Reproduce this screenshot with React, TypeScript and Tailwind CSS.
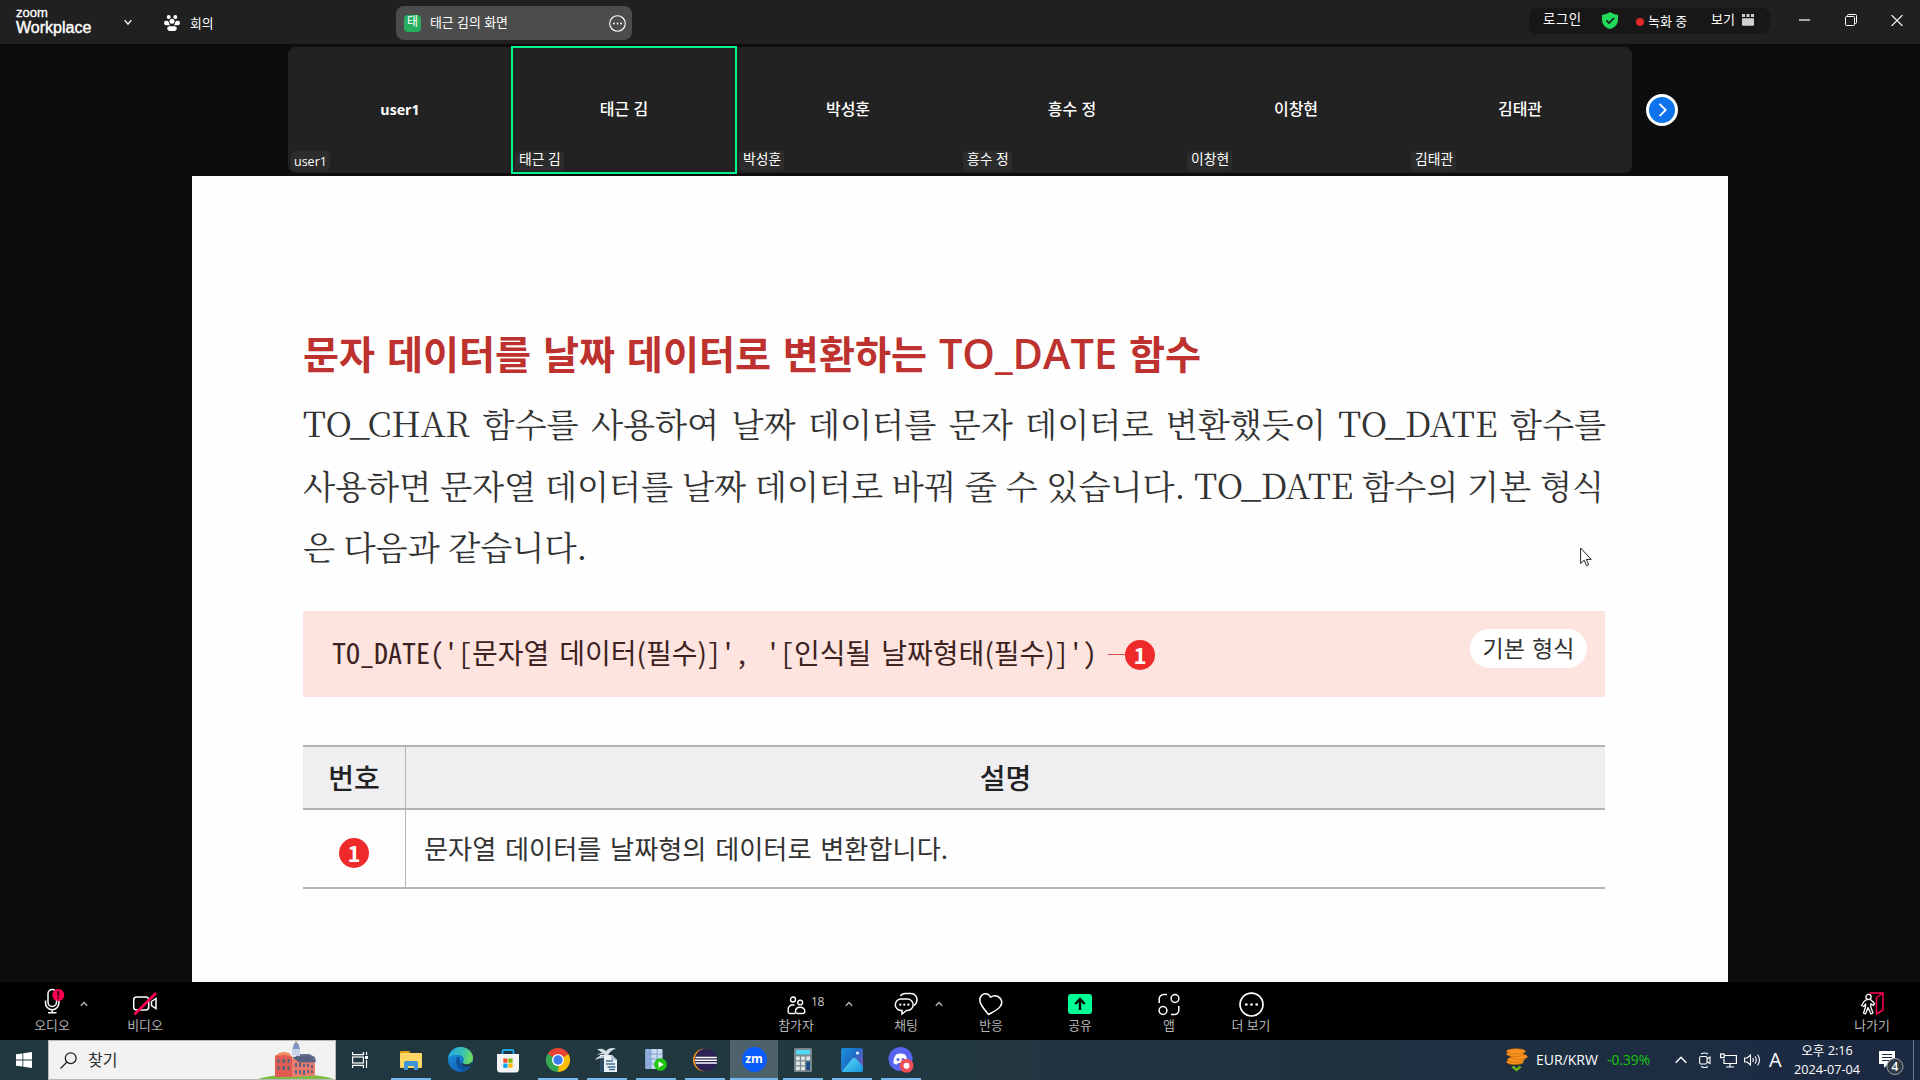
import React from 'react';

const KR = "font-['Open_Sans','Noto_Sans_CJK_KR',sans-serif]";

function Caret({ className = '' }: { className?: string }) {
  return (
    <svg className={`h-[6px] w-[8px] shrink-0 ${className}`} viewBox="0 0 8 6" fill="none" stroke="#b5b5b5" strokeWidth="1.4">
      <path d="M0.8 4.8 4 1.6l3.2 3.2" />
    </svg>
  );
}

function Dots({ size, className = '' }: { size: number; className?: string }) {
  return (
    <svg width={size} height={size} className={`shrink-0 ${className}`} viewBox="0 0 24 24" fill="none" stroke="currentColor" strokeWidth="1.6">
      <circle cx="12" cy="12" r="11" />
      <g fill="currentColor" stroke="none">
        <circle cx="7" cy="12" r="1.3" />
        <circle cx="12" cy="12" r="1.3" />
        <circle cx="17" cy="12" r="1.3" />
      </g>
    </svg>
  );
}

function TopBar() {
  return (
    <header className="flex h-[44px] shrink-0 items-start bg-[#202020] text-[13px] text-white">
      <div className="ml-[16px] mt-[7px] w-[76px] font-['Liberation_Sans',sans-serif] whitespace-nowrap">
        <div className="text-[13px] leading-[12px] [-webkit-text-stroke:0.3px_white]">zoom</div>
        <div className="text-[16px] leading-[17px] [-webkit-text-stroke:0.4px_white]">Workplace</div>
      </div>
      <svg className="ml-[32px] mt-[19px] h-[7px] w-[8px]" viewBox="0 0 8 7" fill="none" stroke="#fff" strokeWidth="1.3">
        <path d="M0.7 1.2 4 5.2l3.3-4" />
      </svg>
      <svg className="ml-[32px] mt-[15px] h-[16px] w-[16px]" viewBox="0 0 16 16" fill="#fff">
        <circle cx="4.7" cy="2" r="2" />
        <circle cx="11.3" cy="2" r="2" />
        <circle cx="2.3" cy="8" r="2.3" />
        <circle cx="13.7" cy="8" r="2.3" />
        <circle cx="8" cy="6.3" r="2.5" />
        <path d="M3.6 5.2 6 10.2H2.6zM12.4 5.2 10 10.2h3.4z" />
        <rect x="3.2" y="11.2" width="9.6" height="4.8" rx="2.4" />
      </svg>
      <div className="ml-[10px] mt-[14px] w-[31px] text-[12.8px] leading-[18px]">회의</div>

      <div className="ml-[175px] mt-[6px] flex h-[34px] w-[236px] items-center rounded-[8px] bg-[#4c4c4c]">
        <div className="ml-[8px] flex h-[17px] w-[17px] items-center justify-center rounded-[4px] bg-[#27ae60] text-[12px] leading-none">
          <span className="-mt-[3px]">태</span>
        </div>
        <div className="mb-[2px] ml-[9px] w-[179px] text-[12.9px] leading-[18px]">태근 김의 화면</div>
        <Dots size={17} />
      </div>

      <div className="ml-[897px] mt-[8px] flex h-[26px] w-[241px] items-start rounded-[8px] bg-[#171717]">
        <div className="ml-[14px] mt-[2px] w-[59px] text-[13.4px] leading-[18px] tracking-[0.6px]">로그인</div>
        <svg className="mt-[4px] h-[17px] w-[16px]" viewBox="0 0 16 17">
          <path d="M8 0c2 1.6 4.600 2.500 8 2.700V8c0 4.500-3.400 7.600-8 9-4.600-1.400-8-4.500-8-9V2.700C3.400 2.500 6 1.600 8 0z" fill="#23d959" />
          <path d="M4.400 8.400 7 11l5-5" fill="none" stroke="#171717" strokeWidth="1.6" />
        </svg>
        <div className="ml-[18px] mt-[10px] h-[8px] w-[8px] rounded-full bg-[#e02828]" />
        <div className="ml-[4px] mt-[4px] w-[63px] text-[13px] leading-[18px]">녹화 중</div>
        <div className="mt-[2px] w-[31px] text-[13px] leading-[18px]">보기</div>
        <svg className="mt-[6px] h-[12px] w-[12px]" viewBox="0 0 12 12" fill="#d0d0d0">
          <path d="M0 0h3v3H0zM4.500 0h3v3h-3zM9 0h3v3H9z" />
          <rect y="4.300" width="12" height="7.400" rx="1" />
        </svg>
      </div>
      <svg className="ml-[29px] mt-[19px] h-[3px] w-[11px]" viewBox="0 0 11 3"><path d="M0 1h11" stroke="#ccc" strokeWidth="1.600" /></svg>
      <svg className="ml-[35px] mt-[14px] h-[12px] w-[12px]" viewBox="0 0 12 12" fill="none" stroke="#fff" strokeWidth="1">
        <rect x="0.500" y="2.500" width="9" height="9" rx="1" />
        <path d="M2.500 2.500v-1a1 1 0 0 1 1-1h7a1 1 0 0 1 1 1v7a1 1 0 0 1-1 1h-1" />
      </svg>
      <svg className="ml-[34px] mt-[15px] h-[11px] w-[12px]" viewBox="0 0 12 11" stroke="#fff" strokeWidth="1.100">
        <path d="M0.500 0l11 11M11.500 0l-11 11" />
      </svg>
    </header>
  );
}

const people = ['user1', '태근 김', '박성훈', '흥수 정', '이창현', '김태관'];

function Gallery() {
  return (
    <section className="flex h-[132px] shrink-0 items-start pl-[288px] pt-[3px] text-white">
      <div className="flex h-[126px] w-[1344px] rounded-[8px] bg-[#222]">
        {people.map((p, i) => (
          <div key={p} className="relative flex w-[224px] items-center justify-center">
            {i === 1 && <div className="absolute -bottom-[1px] -left-[1px] -right-[1px] -top-[1px] border-2 border-[#00f58c]" />}
            <span className={i === 0 ? 'mb-[1px] text-[14.200px] font-bold leading-[20px]' : 'mb-[3px] text-[16px] font-medium leading-[20px]'}>{p}</span>
            <span className={`absolute bottom-[2px] left-[3px] h-[20px] rounded-[4px] bg-[#2c2c2c] ${i === 0 ? 'px-[3px] text-[12.500px] leading-[21px]' : 'pl-[4px] pr-[3px] text-[13.800px] leading-[16px]'}`}>{p}</span>
          </div>
        ))}
      </div>
      <div className="ml-[14px] mt-[47px] flex h-[32px] w-[32px] items-center justify-center rounded-full border-[3px] border-white bg-[#0e72ed]">
        <svg className="h-[14px] w-[9px]" viewBox="0 0 9 14" fill="none" stroke="#fff" strokeWidth="1.800"><path d="M1.500 0.800 7.700 7l-6.200 6.200" /></svg>
      </div>
    </section>
  );
}

function RedOne() {
  return (
    <span className="flex h-[30px] w-[30px] shrink-0 items-center justify-center rounded-full bg-[#ee2a2a] font-['Noto_Sans_CJK_KR',sans-serif] text-[22px] font-bold leading-[30px] text-white">
      <span className="-mt-[3px]">1</span>
    </span>
  );
}

function La({ children }: { children: string }) {
  return <span className="text-[34.600px]">{children}</span>;
}

const M = "font-['Noto_Sans_Mono_CJK_KR','Liberation_Mono',monospace]";

function Slide() {
  return (
    <main className="mx-auto flex h-[806px] w-[1536px] shrink-0 flex-col bg-[#fefefe] pl-[111px] font-['Noto_Sans_CJK_KR',sans-serif]">
      <h1 className="mt-[152px] h-[48px] w-[898px] whitespace-nowrap text-[39.200px] font-bold leading-[48px] text-[#bd322e] [text-align-last:justify]">
        문자 데이터를 날짜 데이터로 변환하는 <span className="font-['Open_Sans'] text-[41.500px] font-semibold leading-[40px]">TO_DATE</span> 함수
      </h1>
      <div className="mt-[15px] whitespace-nowrap font-['Noto_Serif_CJK_KR','Noto_Sans_CJK_KR',serif] text-[33.200px] leading-[62px] text-[#333]">
        <p className="h-[62px] w-[1303px] [text-align-last:justify]"><La>TO_CHAR</La> 함수를 사용하여 날짜 데이터를 문자 데이터로 변환했듯이 <La>TO_DATE</La> 함수를</p>
        <p className="h-[62px] w-[1301px] [text-align-last:justify]">사용하면 문자열 데이터를 날짜 데이터로 바꿔 줄 수 있습니다. <La>TO_DATE</La> 함수의 기본 형식</p>
        <p className="h-[62px] w-[283px] [text-align-last:justify]">은 다음과 같습니다.</p>
      </div>
      <div className="mt-[34px] flex h-[86px] w-[1302px] items-start bg-[#fee4df]">
        <div className="ml-[29px] mt-[21px] flex w-[768px] whitespace-pre text-[28px] leading-[40px] text-[#3d2222]">
          <div><span className={M}>TO_DATE('[</span>문자열</div>
          <div className="ml-[10px]">데이터(필수)<span className={M}>]',</span></div>
          <div className="ml-[17px]"><span className={M}>'[</span>인식될</div>
          <div className="ml-[10px]">날짜형태(필수)<span className={M}>]')</span></div>
        </div>
        <div className="ml-[8px] mt-[43px] h-px w-[17px] bg-[#e05050]" />
        <div className="mt-[29px]"><RedOne /></div>
        <div className="ml-[315px] mt-[18px] flex h-[39px] w-[117px] items-start justify-center rounded-full bg-white text-[23px] leading-[36px] text-[#333] [word-spacing:2px]">기본 형식</div>
      </div>
      <div className="mt-[48px] grid w-[1302px] grid-cols-[103px_1199px] text-[#222]">
        <div className="flex h-[65px] items-center justify-center border-y-2 border-r border-[#b4b3b7] bg-[#efeef1] pb-[1px] text-[28px] font-medium">번호</div>
        <div className="flex h-[65px] items-center justify-center border-y-2 border-[#b4b3b7] bg-[#efeef1] pb-[1px] text-[28px] font-medium">설명</div>
        <div className="flex h-[79px] items-center justify-center border-b-2 border-r border-[#b4b3b7] pt-[9px]"><RedOne /></div>
        <div className="flex h-[79px] items-center border-b-2 border-[#b4b3b7] pl-[18px] text-[26.200px] text-[#333]">
          <p className="w-[524px] whitespace-nowrap [text-align-last:justify]">문자열 데이터를 날짜형의 데이터로 변환합니다.</p>
        </div>
      </div>
    </main>
  );
}

function Tool({ label, className, children }: { label: string; className: string; children: React.ReactNode }) {
  return (
    <div className={`relative flex w-[40px] flex-col items-center ${className}`}>
      <div className="mt-[9px] flex h-[26px] items-center justify-center">{children}</div>
      <div className="-mt-[1px] whitespace-nowrap text-[12.900px] leading-[18px] text-[#b4b4b4]">{label}</div>
    </div>
  );
}

function Toolbar() {
  return (
    <nav className="flex h-[58px] shrink-0 items-start bg-black text-white">
      <Tool label="오디오" className="ml-[32px]">
        <svg className="h-[26px] w-[26px] overflow-visible" viewBox="0 0 26 26" fill="none" stroke="#fff" strokeWidth="1.500">
          <rect x="9" y="-1.500" width="8.500" height="17" rx="4.250" />
          <path d="M6.500 9.500v2.500a6.700 6.700 0 0 0 13.400 0v-2.500M13.200 18.700v3.300M9 21.700h8.500" />
          <circle cx="19.300" cy="4" r="6" fill="#ff0050" stroke="none" />
          <path d="M19.300 0.200v4.600" stroke="#300" strokeWidth="1.800" />
          <circle cx="19.300" cy="6.900" r="1" fill="#300" stroke="none" />
        </svg>
      </Tool>
      <Caret className="ml-[8px] mt-[19px]" />
      <Tool label="비디오" className="ml-[37px]">
        <svg className="h-[26px] w-[26px]" viewBox="0 0 26 26" fill="none" stroke="#fff" strokeWidth="1.500">
          <rect x="1.700" y="6" width="15" height="13" rx="3" />
          <path d="M19.500 10.500 24 7.500v10l-4.500-3z" />
          <path d="M2.500 23.500 24 2" stroke="#ff0050" strokeWidth="2.600" />
        </svg>
      </Tool>
      <Tool label="참가자" className="ml-[611px]">
        <svg className="mt-[2px] h-[19px] w-[19px]" viewBox="0 0 19 19" fill="none" stroke="#fff" strokeWidth="1.400">
          <circle cx="6" cy="3.500" r="2.500" />
          <circle cx="13.200" cy="6.500" r="2.400" />
          <path d="M8 17.500H3A1.800 1.800 0 0 1 1.200 15.700V13A4 4 0 0 1 5.200 9h2.300" />
          <path d="M8.500 15.500c0-2.600 2-4.300 4.600-4.300s4.700 1.700 4.700 4.300c0 1.200-.8 2-2 2h-5.300c-1.200 0-2-.8-2-2z" />
        </svg>
        <span className="absolute left-[35px] top-[12px] text-[12px] leading-[16px] tracking-[-0.3px] text-[#c8c8c8]">18</span>
      </Tool>
      <Caret className="ml-[29px] mt-[19px]" />
      <Tool label="채팅" className="ml-[33px]">
        <svg className="h-[24px] w-[24px]" viewBox="0 0 24 24" fill="none" stroke="#fff" strokeWidth="1.500">
          <path d="M6.500 4C7.500 2.200 9 1.500 11.500 1.500H17a6 6 0 0 1 6 6c0 3-1 4.500-3 6" />
          <path d="M7 7h6.500a5.700 5.700 0 0 1 0 11.400H12.500L8 22v-3.600H7A5.700 5.700 0 0 1 7 7z" />
          <g fill="#fff" stroke="none"><circle cx="6.300" cy="12.700" r="1.100" /><circle cx="10.300" cy="12.700" r="1.100" /><circle cx="14.300" cy="12.700" r="1.100" /></g>
        </svg>
      </Tool>
      <Caret className="ml-[9px] mt-[19px]" />
      <Tool label="반응" className="ml-[28px]">
        <svg className="h-[24px] w-[24px]" viewBox="0 0 24 24" fill="none" stroke="#fff" strokeWidth="1.500" strokeLinejoin="round">
          <path d="M9.500 22.500C5 17 1.800 13.500 1 9.500.3 5 3 2 6 1.700c2.500-.2 4.300 1 5.500 3.500 2.500-1.700 5-2 7.500-.7 3.500 2 5 6 2.500 9.500C19.500 17.500 15 19.500 9.500 22.500z" />
        </svg>
      </Tool>
      <Tool label="공유" className="ml-[49px]">
        <svg className="h-[20px] w-[24px]" viewBox="0 0 24 20">
          <rect width="24" height="20" rx="3" fill="#00ff96" />
          <path d="M12 16V6M7.300 10 12 5l4.700 5" fill="none" stroke="#000" strokeWidth="2.400" />
        </svg>
      </Tool>
      <Tool label="앱" className="ml-[49px]">
        <svg className="h-[23px] w-[22px]" viewBox="0 0 22 23" fill="none" stroke="#fff" strokeWidth="1.500">
          <circle cx="17" cy="5.500" r="3.900" />
          <circle cx="5" cy="17.500" r="3.900" />
          <path d="M1.200 10V6a4.500 4.500 0 0 1 4.500-4.500H9M20.800 13v4a4.500 4.500 0 0 1-4.500 4.500H13" />
        </svg>
      </Tool>
      <Tool label="더 보기" className="ml-[42px]"><Dots size={25} /></Tool>
      <Tool label="나가기" className="ml-[581px]">
        <svg className="h-[26px] w-[24px]" viewBox="0 0 24 26" fill="none" stroke="#fff" strokeWidth="1.300" strokeLinejoin="round">
          <path d="M9.500 2H23v17l-6.500 4V6.500L23 2" stroke="#ff0050" strokeWidth="1.500" />
          <circle cx="8.500" cy="6" r="2.600" fill="#000" />
          <path d="M6 9c1.500-.7 3.500-.7 5 0l3.500 3.500-1 2-2.700-1.700V16l2.200 6-2 1-3-6.500L5.500 23l-2-.8L5.500 16l.2-3-2 2.500-2.200-1L4 10.500z" fill="#000" />
        </svg>
      </Tool>
    </nav>
  );
}

function TaskIcon({ w = 40, ml, on = true, active = false, children }: { w?: number; ml: string; on?: boolean; active?: boolean; children: React.ReactNode }) {
  return (
    <div className={`flex h-full flex-col items-center justify-between ${w === 48 ? 'w-[48px]' : 'w-[40px]'} ${ml} ${active ? 'bg-[#4d626a]' : ''}`}>
      <div className="flex h-[38px] items-center justify-center pt-[1px]">{children}</div>
      <div className={`h-[2px] w-full ${on ? 'bg-[#76b9ed]' : ''}`} />
    </div>
  );
}

function Building() {
  return (
    <svg className="h-[38px] w-[77px]" viewBox="0 0 77 38">
      <ellipse cx="38" cy="41" rx="41" ry="7.500" fill="#7dbb42" />
      <path d="M36 17 41 13h10l6 3 1 5H38z" fill="#66708f" />
      <path d="M17 14.500l8-2.500 9 3v21H17z" fill="#e05c52" />
      <path d="M18 15l3-3 5-1 5 1 3 4-8-2z" fill="#f08c5e" />
      <path d="M34 17l7 3 16 1.500v13L34 36z" fill="#ee7a6c" />
      <path d="M34 16l18-1 5 6.500H41z" fill="#56617f" />
      <path d="M34 14V8h8v7z" fill="#c8d2ea" />
      <path d="M34.500 8l1.500-5 2-2.500L40.500 3l1.500 5z" fill="#7f93bd" />
      <path d="M38 0v2" stroke="#e0a040" />
      <g fill="#5b6480">
        <path d="M19.500 18h2v4h-2zM24.500 18h2.500v4h-2.500zM29.500 18h2v4h-2zM19.500 25h2v4h-2zM24.500 25h2.500v4h-2.500zM29.500 25h2v4h-2zM37 22h2v4h-2zM41 22h2v4h-2zM45 23h2v3h-2zM49 23h2v3h-2zM53 24h2v3h-2zM37 29h2v4h-2zM41 29h2v4h-2zM45 29h2v5h-2zM49 29h2v3h-2zM53 29h2v3h-2z" />
      </g>
    </svg>
  );
}

function Taskbar() {
  return (
    <footer className="flex h-[40px] shrink-0 items-center bg-linear-to-r from-[#213740] via-[#22383f] via-45% to-[#1b2942] text-white">
      <svg className="ml-[16px] h-[16px] w-[16px]" viewBox="0 0 16 16" fill="#fff">
        <path d="M0 2.300 6.500 1.400v6.200H0zM7.300 1.300 16 0v7.600H7.300zM0 8.400h6.500v6.200L0 13.700zM7.300 8.400H16V16l-8.700-1.300z" />
      </svg>
      <div className="ml-[16px] flex h-[40px] w-[288px] items-center border border-[#b9b9b9] bg-[#f2f2f2] text-[#2b2b2b]">
        <svg className="ml-[11px] h-[17px] w-[17px]" viewBox="0 0 17 17" fill="none" stroke="#222" strokeWidth="1.300">
          <circle cx="10.700" cy="6.200" r="5.400" />
          <path d="M7 10 0.500 16.500" />
        </svg>
        <div className="-mt-[1px] ml-[11px] w-[170px] text-[16px] leading-[20px]">찾기</div>
        <Building />
      </div>
      <svg className="ml-[16px] h-[16px] w-[16px]" viewBox="0 0 16 16" fill="none" stroke="#fff" strokeWidth="1.200">
        <path d="M0.600 0v2.600h10.800V0M0.600 16v-2.600h10.800V16M14.500 0v3M14.500 8v8" />
        <rect x="0.600" y="5" width="10.800" height="6" />
        <rect x="13" y="4" width="3" height="3" fill="#fff" stroke="none" />
      </svg>
      <TaskIcon ml="ml-[23px]">
        <svg className="h-[20px] w-[22px]" viewBox="0 0 22 20">
          <path d="M0 2a1 1 0 0 1 1-1h8l2 3H0z" fill="#e5a50f" />
          <rect y="3" width="22" height="15" rx="1" fill="#ffd767" />
          <path d="M4 20v-7a2 2 0 0 1 2-2h10a2 2 0 0 1 2 2v7h-4v-4H8v4z" fill="#3f94d8" />
        </svg>
      </TaskIcon>
      <TaskIcon ml="ml-[9px]" on={false}>
        <svg className="h-[25px] w-[25px]" viewBox="0 0 24 24">
          <defs>
            <linearGradient id="edgeTop" x1="0" y1="0.300" x2="1" y2="0.500">
              <stop offset="0" stopColor="#2aa7e0" /><stop offset="0.550" stopColor="#35c2b8" /><stop offset="1" stopColor="#6edb55" />
            </linearGradient>
            <linearGradient id="edgeLow" x1="0" y1="0" x2="0.600" y2="1">
              <stop offset="0" stopColor="#1b9de2" /><stop offset="1" stopColor="#0f5fb4" />
            </linearGradient>
          </defs>
          <circle cx="12" cy="12" r="12" fill="url(#edgeLow)" />
          <path d="M0.200 10.500C1.500 4 6.500 0 12 0c7 0 12 5 12 10.500 0 4-3 6-6.500 6-3 0-4-1.300-3-2.500 2-2.500-.5-6.500-5-6.500C5 7.500 1.500 8.500.2 10.500z" fill="url(#edgeTop)" />
          <path d="M9.500 9c-3.500 4-1.500 11 5 13 3-.2 5.500-1.700 7-4-5 2-11-1-10.500-5.500 0-1.500-.3-3-1.500-3.500z" fill="#0c4f9c" />
          <path d="M14 14.500c-.8 1.500 1 2.200 3.500 2.200 2.500 0 4.500-1 5.500-2.500l-.5 4.300c-3 1-8.500.5-9.500-3z" fill="#22383f" />
        </svg>
      </TaskIcon>
      <TaskIcon ml="ml-[8px]" on={false}>
        <svg className="mt-[2px] h-[24px] w-[24px]" viewBox="0 0 24 24">
          <path d="M6.500 7V2.500A1.500 1.500 0 0 1 8 1h8a1.500 1.500 0 0 1 1.500 1.500V7" fill="none" stroke="#22a5e8" strokeWidth="1.800" />
          <path d="M1 5h22v15a3.500 3.500 0 0 1-3.500 3.500h-15A3.500 3.500 0 0 1 1 20z" fill="#f3f3f3" />
          <path d="M7.300 9.500h4.200v4.200H7.300z" fill="#f25022" /><path d="M12.400 9.500h4.200v4.200h-4.200z" fill="#7fba00" />
          <path d="M7.300 14.600h4.200v4.200H7.300z" fill="#00a4ef" /><path d="M12.400 14.600h4.200v4.200h-4.200z" fill="#ffb900" />
        </svg>
      </TaskIcon>
      <TaskIcon ml="ml-[10px]">
        <svg className="h-[24px] w-[24px]" viewBox="0 0 24 24">
          <path d="M12 12 1.600 6A12 12 0 0 1 22.400 6z" fill="#ea4335" />
          <path d="M12 12 22.400 6A12 12 0 0 1 12 24z" fill="#fbbc04" />
          <path d="M12 12v12A12 12 0 0 1 1.600 6z" fill="#34a853" />
          <path d="M7.200 15 1.600 6 12 12zM16.800 15 12 24 10 15z" fill="#34a853" />
          <path d="M17.200 15 12 24l1-9z" fill="#fbbc04" />
          <circle cx="12" cy="12" r="6" fill="#fff" /><circle cx="12" cy="12" r="4.700" fill="#3b7ded" />
        </svg>
      </TaskIcon>
      <TaskIcon ml="ml-[9px]">
        <svg className="h-[24px] w-[24px]" viewBox="0 0 24 24">
          <path d="M5 7h12l5 5v12H5z" fill="#eef2f5" /><path d="M5 8h4v16H5z" fill="#2a4c66" /><path d="M16 7v5h6z" fill="#b6c6d2" />
          <path d="M11 13h7M11 16h9M12.500 19h8M14 21.500h6" stroke="#3f7396" strokeWidth="1.300" />
          <path d="M2 1.500c4-1.500 7-1 9 1.700C13.500 0 17-.5 21 .7c-4 .8-6.500 3.300-8.500 7.300-3-2-6.500-2.200-10.500-.8 1.500-1.600 3-2.200 5.500-2.200C5.500 3.500 4 2.300 2 1.500zM0 12c3-4.500 7-5 11-2-3.500-.5-7 .5-11 2z" fill="#d5dee4" />
        </svg>
      </TaskIcon>
      <TaskIcon ml="ml-[9px]">
        <svg className="h-[24px] w-[22px]" viewBox="0 0 22 24">
          <rect x="0.500" y="1" width="17" height="20" rx="1" fill="#c9dbf3" />
          <path d="M0.500 1h5.500v20H0.500z" fill="#8fb0de" />
          <path d="M0.500 6h17M0.500 11h17M0.500 16h17M6 1v20M12 1v20" stroke="#7d9bc9" strokeWidth=".9" />
          <circle cx="15.500" cy="16.500" r="6.300" fill="#1fc60f" /><path d="M13.500 13.300v6.400l5.200-3.200z" fill="#fff" />
        </svg>
      </TaskIcon>
      <TaskIcon ml="ml-[9px]">
        <svg className="h-[24px] w-[24px]" viewBox="0 0 24 24">
          <circle cx="11.300" cy="12" r="11.300" fill="#f7941e" /><circle cx="13" cy="12" r="11.300" fill="#2c2255" />
          <path d="M2.500 9.500h21.300M2 12.200h22M2.500 15h21.300" stroke="#fff" strokeWidth="1.500" />
        </svg>
      </TaskIcon>
      <TaskIcon ml="ml-[5px]" w={48} active>
        <div className="flex h-[25px] w-[25px] items-center justify-center rounded-full bg-[#0b5cff] font-['Open_Sans'] text-[12px] font-bold leading-none"><span className="-mt-[2px]">zm</span></div>
      </TaskIcon>
      <TaskIcon ml="ml-[5px]">
        <svg className="h-[24px] w-[18px]" viewBox="0 0 18 24">
          <rect width="18" height="24" rx="1.500" fill="#7b868c" /><rect x="2" y="2" width="14" height="4.500" fill="#50d8f5" />
          <path d="M2 8.500h3.800v3.800H2zM7.100 8.500h3.800v3.800H7.100zM12.200 8.500H16v3.800h-3.800zM2 13.500h3.800v3.800H2zM7.100 13.500h3.800v3.800H7.100zM2 18.500h3.800v3.800H2zM7.100 18.500h3.800v3.800H7.100z" fill="#dfe6e8" />
          <path d="M12.200 13.500H16v8.800h-3.800z" fill="#1a4f86" />
        </svg>
      </TaskIcon>
      <TaskIcon ml="ml-[9px]">
        <svg className="h-[24px] w-[22px]" viewBox="0 0 22 24">
          <defs>
            <linearGradient id="photoBg" x1="0" y1="0" x2="1" y2="0.600">
              <stop offset="0" stopColor="#1a93de" /><stop offset="0.550" stopColor="#1c6fc6" /><stop offset="1" stopColor="#6a55b8" />
            </linearGradient>
            <linearGradient id="photoHill" x1="0" y1="0" x2="1" y2="1">
              <stop offset="0" stopColor="#5fe0fb" /><stop offset="1" stopColor="#1593dc" />
            </linearGradient>
          </defs>
          <rect width="22" height="24" rx="2" fill="url(#photoBg)" />
          <path d="M1 23.300 11.500 10.500q1.700-1.700 3.400 0L22 18.500V22a2 2 0 0 1-2 2H2q-.6 0-1-.7z" fill="url(#photoHill)" />
          <circle cx="16.500" cy="5" r="1.600" fill="#e8f4ff" />
        </svg>
      </TaskIcon>
      <TaskIcon ml="ml-[9px]">
        <svg className="mt-[1px] h-[26px] w-[26px]" viewBox="0 0 26 26">
          <circle cx="12.500" cy="12" r="12" fill="#5865f2" />
          <path d="M8 7.500c3-1.200 6-1.200 9 0 2 3 2.800 5.500 2.500 8.500-1.200 1-2.500 1.500-3.500 1.500l-1-1.500h-5l-1 1.500c-1 0-2.300-.5-3.500-1.500-.3-3 .5-5.500 2.500-8.500z" fill="#fff" />
          <circle cx="10" cy="12.500" r="1.500" fill="#5865f2" /><circle cx="15" cy="12.500" r="1.500" fill="#5865f2" />
          <circle cx="18.500" cy="18.700" r="7" fill="#ed4f56" /><circle cx="18.500" cy="18.700" r="3" fill="#fff" />
        </svg>
      </TaskIcon>

      <svg className="ml-[584px] h-[24px] w-[23px] shrink-0" viewBox="0 0 23 24">
        <g fill="#f7931e" stroke="#c96a08" strokeWidth=".6">
          <ellipse cx="10" cy="14" rx="8.500" ry="2.600" /><ellipse cx="11" cy="11.500" rx="8.500" ry="2.600" /><ellipse cx="14" cy="8.700" rx="8.500" ry="2.600" /><ellipse cx="10" cy="6" rx="8.500" ry="2.600" /><ellipse cx="11" cy="3.300" rx="9.500" ry="2.600" />
        </g>
        <path d="M7.500 18.500 11.500 22l4-3.500" fill="none" stroke="#6cb81b" strokeWidth="2.400" />
      </svg>
      <div className="ml-[8px] w-[71px] shrink-0 whitespace-nowrap font-['Open_Sans'] text-[14px] leading-[20px]">EUR/KRW</div>
      <div className="w-[68px] shrink-0 font-['Open_Sans'] text-[13.800px] leading-[20px] text-[#16c60c]">-0.39%</div>
      <svg className="h-[8px] w-[12px] shrink-0" viewBox="0 0 12 8" fill="none" stroke="#fff" strokeWidth="1.400"><path d="M0.700 6.800 6 1.200l5.300 5.600" /></svg>
      <svg className="ml-[12px] h-[16px] w-[12px] shrink-0" viewBox="0 0 12 16" fill="none" stroke="#fff" strokeWidth="1.100">
        <rect x="0.600" y="4.500" width="7.500" height="7.500" rx="1.500" /><path d="M8 7l3-2v6.500l-3-2M2 2q4-2 7 0M2 14.500q4 2 7 0" />
      </svg>
      <svg className="ml-[9px] h-[15px] w-[17px] shrink-0" viewBox="0 0 17 15" fill="none" stroke="#fff" strokeWidth="1.200">
        <path d="M5 2.500h11.400v8H4V6M10 10.500v3M6 14h8" /><rect x="0.600" y="1" width="3.600" height="3.600" />
      </svg>
      <svg className="ml-[7px] h-[14px] w-[17px] shrink-0" viewBox="0 0 17 14" fill="none" stroke="#fff" strokeWidth="1.100">
        <path d="M0.600 5v4h2.500L6.500 12V2L3.100 5zM8.700 5q1.300 2 0 4M11 3.300q2.600 3.700 0 7.400M13.500 1.500q4 5.500 0 11" />
      </svg>
      <div className="ml-[8px] w-[16px] shrink-0 font-['Open_Sans'] text-[20px] leading-[24px]">A</div>
      <div className="ml-[4px] w-[76px] shrink-0 whitespace-nowrap text-center text-[12.700px]">
        <div className="h-[18px] leading-[17px]">오후 2:16</div>
        <div className="leading-[18px]">2024-07-04</div>
      </div>
      <svg className="ml-[13px] mt-[5px] h-[28px] w-[26px] shrink-0 overflow-visible" viewBox="0 0 26 28">
        <path d="M1 2h16v13H10l-4 4v-4H1z" fill="#fff" /><path d="M4 5.500h10M4 8.500h10M4 11.500h7" stroke="#1b2942" />
        <circle cx="17" cy="17.500" r="8" fill="#2f3a44" stroke="#98a0a8" />
        <text x="17" y="22" textAnchor="middle" fontSize="12" fontWeight="600" fontFamily="Open Sans" fill="#fff">4</text>
      </svg>
      <div className="ml-[9px] h-full w-px bg-[#6f7b8c]" />
    </footer>
  );
}

export default function App() {
  return (
    <div className={`relative flex h-[1080px] w-[1920px] flex-col overflow-hidden bg-[#0d0d0d] ${KR}`}>
      <TopBar />
      <Gallery />
      <Slide />
      <Toolbar />
      <Taskbar />
      <svg className="absolute left-[1580px] top-[547px] h-[20px] w-[12px]" viewBox="0 0 12 20" fill="#fff" stroke="#222" strokeWidth="1">
        <path d="M0.600 1v15.500l3.600-3.300 2.300 5.500 2.200-1-2.300-5.300h4.800z" />
      </svg>
    </div>
  );
}
